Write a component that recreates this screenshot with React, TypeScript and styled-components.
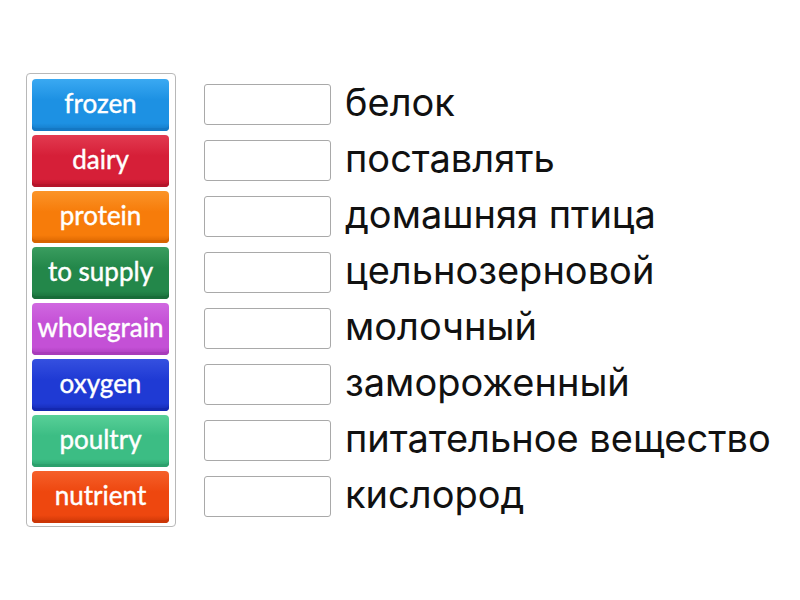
import React from "react";
import styled, { createGlobalStyle } from "styled-components";

const Global = createGlobalStyle`
  html, body { margin: 0; padding: 0; background: #ffffff; }
  body { width: 800px; height: 600px; overflow: hidden; }
`;

const Page = styled.div`
  display: flex;
  align-items: flex-start;
  padding: 73px 0 0 26px;
  gap: 28px;
`;

const Bank = styled.div`
  display: flex;
  flex-direction: column;
  gap: 4px;
  padding: 5px 6px 3px 5px;
  border: 1px solid #b8b8b8;
  border-radius: 4px;
  background: #fff;
`;

const Tile = styled.div<{ $c: string; $light: string; $dark: string }>`
  width: 137px;
  height: 52px;
  box-sizing: border-box;
  display: flex;
  align-items: center;
  justify-content: center;
  border-radius: 4px;
  background: linear-gradient(to bottom, ${(p) => p.$light} 0%, ${(p) => p.$c} 40%, ${(p) => p.$c} 85%, ${(p) => p.$dark} 100%);
  box-shadow: inset 0 -3px 0 ${(p) => p.$dark};
  color: #fff;
  font-family: "Lato", "Open Sans", sans-serif;
  font-weight: 400;
  font-size: 26px;
  -webkit-text-stroke: 0.4px #fff;
  padding-bottom: 4px;
  white-space: nowrap;
`;

const Targets = styled.div`
  display: flex;
  flex-direction: column;
  gap: 15px;
  padding-top: 11px;
`;

const Row = styled.div`
  display: flex;
  align-items: center;
  gap: 14px;
  height: 41px;
`;

const Slot = styled.div`
  width: 127px;
  height: 41px;
  box-sizing: border-box;
  border: 1px solid #a9a9a9;
  border-radius: 3px;
  background: #fff;
`;

const Term = styled.span`
  font-family: "Inter", "Roboto", sans-serif;
  font-size: 38px;
  color: #111;
  white-space: nowrap;
  line-height: 1;
  padding-bottom: 6px;
`;

const tiles = [
  { t: "frozen", c: "#1d91e3", l: "#3aa9f2", d: "#1478c4" },
  { t: "dairy", c: "#d61f38", l: "#e23a50", d: "#b5152b" },
  { t: "protein", c: "#f77c0a", l: "#fb9428", d: "#d86400" },
  { t: "to supply", c: "#23874a", l: "#3a9d5f", d: "#186d39" },
  { t: "wholegrain", c: "#c450d6", l: "#d068e0", d: "#a83cba" },
  { t: "oxygen", c: "#1f3ad4", l: "#3550e0", d: "#1428b0" },
  { t: "poultry", c: "#3cbd84", l: "#58d098", d: "#2ca06c" },
  { t: "nutrient", c: "#ee470f", l: "#f5602a", d: "#cc3606" },
];

const terms = [
  "белок",
  "поставлять",
  "домашняя птица",
  "цельнозерновой",
  "молочный",
  "замороженный",
  "питательное вещество",
  "кислород",
];

export default function App() {
  return (
    <>
      <Global />
      <Page>
        <Bank>
          {tiles.map((x) => (
            <Tile key={x.t} $c={x.c} $light={x.l} $dark={x.d}>
              {x.t}
            </Tile>
          ))}
        </Bank>
        <Targets>
          {terms.map((t) => (
            <Row key={t}>
              <Slot />
              <Term>{t}</Term>
            </Row>
          ))}
        </Targets>
      </Page>
    </>
  );
}
